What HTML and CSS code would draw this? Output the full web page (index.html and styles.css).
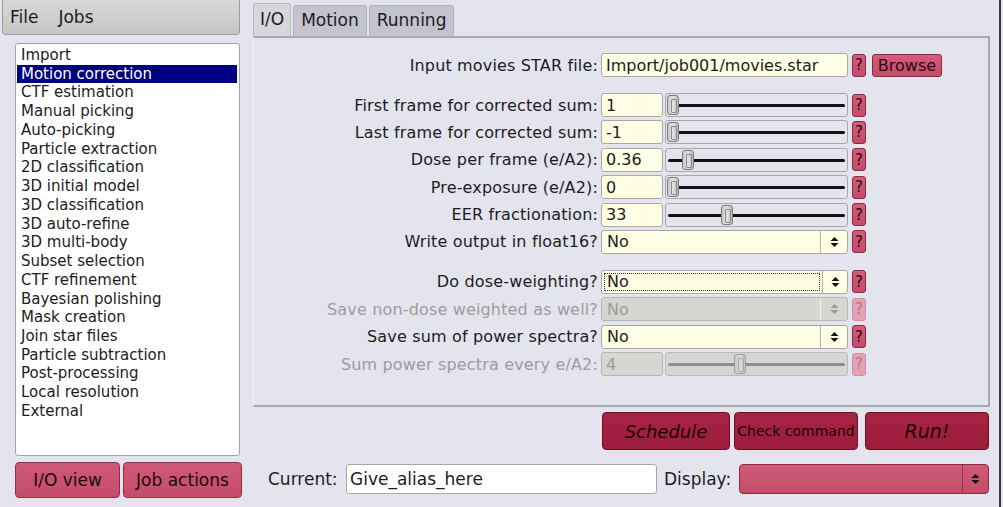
FILE: index.html
```html
<!DOCTYPE html>
<html>
<head>
<meta charset="utf-8">
<link rel="stylesheet" href="styles.css">
</head>
<body>
<div class="app">
  <div class="left">
    <div class="menubar"><span>File</span><span>Jobs</span></div>
    <div class="joblist">
      <div class="item">Import</div>
      <div class="item sel">Motion correction</div>
      <div class="item">CTF estimation</div>
      <div class="item">Manual picking</div>
      <div class="item">Auto-picking</div>
      <div class="item">Particle extraction</div>
      <div class="item">2D classification</div>
      <div class="item">3D initial model</div>
      <div class="item">3D classification</div>
      <div class="item">3D auto-refine</div>
      <div class="item">3D multi-body</div>
      <div class="item">Subset selection</div>
      <div class="item">CTF refinement</div>
      <div class="item">Bayesian polishing</div>
      <div class="item">Mask creation</div>
      <div class="item">Join star files</div>
      <div class="item">Particle subtraction</div>
      <div class="item">Post-processing</div>
      <div class="item">Local resolution</div>
      <div class="item">External</div>
    </div>
    <div class="leftbtns">
      <div class="pbtn io">I/O view</div>
      <div class="pbtn ja">Job actions</div>
    </div>
  </div>
  <div class="right">
    <div class="tabs">
      <div class="tab active">I/O</div>
      <div class="tab">Motion</div>
      <div class="tab">Running</div>
    </div>
    <div class="panel">
      <div class="group">
        <div class="row">
          <div class="lbl">Input movies STAR file:</div>
          <div class="ctl"><div class="input full">Import/job001/movies.star</div></div>
          <div class="help">?</div>
          <div class="browse">Browse</div>
        </div>
      </div>
      <div class="group">
        <div class="row">
          <div class="lbl">First frame for corrected sum:</div>
          <div class="ctl"><div class="input num">1</div><div class="slider"><div class="track"></div><div class="knob" style="left:1px"></div></div></div>
          <div class="help">?</div>
        </div>
        <div class="row">
          <div class="lbl">Last frame for corrected sum:</div>
          <div class="ctl"><div class="input num">-1</div><div class="slider"><div class="track"></div><div class="knob" style="left:1px"></div></div></div>
          <div class="help">?</div>
        </div>
        <div class="row">
          <div class="lbl">Dose per frame (e/A2):</div>
          <div class="ctl"><div class="input num">0.36</div><div class="slider"><div class="track"></div><div class="knob" style="left:16px"></div></div></div>
          <div class="help">?</div>
        </div>
        <div class="row">
          <div class="lbl">Pre-exposure (e/A2):</div>
          <div class="ctl"><div class="input num">0</div><div class="slider"><div class="track"></div><div class="knob" style="left:1px"></div></div></div>
          <div class="help">?</div>
        </div>
        <div class="row">
          <div class="lbl">EER fractionation:</div>
          <div class="ctl"><div class="input num">33</div><div class="slider"><div class="track"></div><div class="knob" style="left:55px"></div></div></div>
          <div class="help">?</div>
        </div>
        <div class="row">
          <div class="lbl">Write output in float16?</div>
          <div class="ctl"><div class="select"><div class="val">No</div><div class="arr"><svg width="9" height="12" viewBox="0 0 9 12"><path d="M0.5 5 L4.5 1 L8.5 5 Z M0.5 7 L4.5 11 L8.5 7 Z" fill="#111"/></svg></div></div></div>
          <div class="help">?</div>
        </div>
      </div>
      <div class="group">
        <div class="row">
          <div class="lbl">Do dose-weighting?</div>
          <div class="ctl"><div class="select"><div class="val"><span class="focus">No</span></div><div class="arr"><svg width="9" height="12" viewBox="0 0 9 12"><path d="M0.5 5 L4.5 1 L8.5 5 Z M0.5 7 L4.5 11 L8.5 7 Z" fill="#111"/></svg></div></div></div>
          <div class="help">?</div>
        </div>
        <div class="row dis">
          <div class="lbl">Save non-dose weighted as well?</div>
          <div class="ctl"><div class="select"><div class="val">No</div><div class="arr"><svg width="9" height="12" viewBox="0 0 9 12"><path d="M0.5 5 L4.5 1 L8.5 5 Z M0.5 7 L4.5 11 L8.5 7 Z" fill="#9a9a9a"/></svg></div></div></div>
          <div class="help">?</div>
        </div>
        <div class="row">
          <div class="lbl">Save sum of power spectra?</div>
          <div class="ctl"><div class="select"><div class="val">No</div><div class="arr"><svg width="9" height="12" viewBox="0 0 9 12"><path d="M0.5 5 L4.5 1 L8.5 5 Z M0.5 7 L4.5 11 L8.5 7 Z" fill="#111"/></svg></div></div></div>
          <div class="help">?</div>
        </div>
        <div class="row dis">
          <div class="lbl">Sum power spectra every e/A2:</div>
          <div class="ctl"><div class="input num">4</div><div class="slider"><div class="track"></div><div class="knob" style="left:68px"></div></div></div>
          <div class="help">?</div>
        </div>
      </div>
    </div>
    <div class="actions">
      <div class="dbtn sched">Schedule</div>
      <div class="dbtn check">Check command</div>
      <div class="dbtn run">Run!</div>
    </div>
    <div class="bottom">
      <div class="blbl cur">Current:</div>
      <div class="alias">Give_alias_here</div>
      <div class="blbl disp">Display:</div>
      <div class="display"><div class="dval"></div><div class="darr"><svg width="9" height="12" viewBox="0 0 9 12"><path d="M0.5 5 L4.5 1 L8.5 5 Z M0.5 7 L4.5 11 L8.5 7 Z" fill="#111"/></svg></div></div>
    </div>
  </div>
  <div class="edge"></div>
</div>
</body>
</html>
```
FILE: styles.css
```css
* { box-sizing: border-box; }
html, body { margin: 0; padding: 0; }
body {
  width: 1003px;
  height: 507px;
  overflow: hidden;
  background: #e4e4ee;
  font-family: "DejaVu Sans", sans-serif;
  color: #1c1c1c;
}
.app { display: flex; height: 507px; }

/* left column */
.left { width: 253px; flex: none; display: flex; flex-direction: column; }
.menubar {
  margin-left: 2px;
  width: 238px;
  height: 35px;
  border: 1px solid #9c9ca0;
  border-top: none;
  border-radius: 0 0 4px 4px;
  background: linear-gradient(#d8d8d8, #c6c6c6);
  font-size: 17px;
  display: flex;
  align-items: center;
  gap: 20px;
  padding: 0 0 0 7px;
}
.joblist {
  margin: 8px 0 0 15px;
  width: 225px;
  height: 413px;
  background: #fff;
  border: 1px solid #a4a4a8;
  border-radius: 3px;
  padding: 2px 2px 1px 1px;
  font-size: 15px;
}
.item { height: 18.74px; line-height: 18.74px; padding-left: 4px; white-space: nowrap; }
.item.sel { background: #000080; color: #fff; }
.leftbtns { display: flex; gap: 3px; margin: 6px 0 0 15px; }
.pbtn {
  height: 36px;
  border: 1px solid #8c3048;
  border-radius: 4px;
  background: linear-gradient(#d05a76, #c44c68);
  font-size: 17px;
  display: flex;
  align-items: center;
  justify-content: center;
  color: #1a0a0e;
}
.pbtn.io { width: 105px; }
.pbtn.ja { width: 119px; }

/* right column */
.right { width: 737px; flex: none; display: flex; flex-direction: column; }
.tabs { display: flex; align-items: flex-end; height: 36px; gap: 2px; }
.tab {
  height: 31px;
  padding: 0 7px 2px;
  font-size: 17px;
  display: flex;
  align-items: center;
  background: #c4c4d0;
  border: 1px solid #b0b0bc;
  border-bottom: none;
  border-radius: 3px 3px 0 0;
}
.tab.active { height: 33px; background: #d6d6dc; padding: 0 6px 2px; border-color: #b8b8c0; }
.panel {
  height: 371px;
  border-top: 2px solid #a8a8b2;
  border-right: 2px solid #a8a8b2;
  border-bottom: 2px solid #a8a8b2;
  border-left: 1px solid #f2f2f8;
  padding-top: 15px;
  display: flex;
  flex-direction: column;
  gap: 16px;
  font-size: 16px;
}
.group { display: flex; flex-direction: column; gap: 3.4px; }
.row { display: flex; align-items: center; height: 24px; }
.lbl { width: 344px; text-align: right; margin-right: 3px; white-space: nowrap; letter-spacing: 0.16px; }
.ctl { width: 247px; height: 24px; display: flex; gap: 2px; }
.input {
  height: 24px;
  background: #ffffe6;
  border: 1px solid #a8a8a0;
  border-radius: 3px;
  padding-left: 4px;
  display: flex;
  align-items: center;
  white-space: nowrap;
}
.input.full { width: 247px; }
.input.num { width: 62px; }
.slider {
  position: relative;
  width: 183px;
  height: 24px;
  border: 1px solid #a8a8ac;
  border-radius: 3px;
}
.track {
  position: absolute;
  left: 2px; right: 2px; top: 10px;
  height: 3px;
  border-radius: 2px;
  background: #111;
}
.knob {
  position: absolute;
  top: 1px;
  width: 12px;
  height: 20px;
  border: 1px solid #7c7c80;
  border-radius: 3px;
  background: linear-gradient(90deg, #c8c8c8, #e2e2e2 50%, #b8b8b8);
}
.knob::after {
  content: "";
  position: absolute;
  left: 3px; top: 3px;
  width: 4px; height: 12px;
  border: 1px solid #8a8a8a;
  border-radius: 1px;
}
.select {
  width: 247px;
  height: 24px;
  background: #ffffe6;
  border: 1px solid #a8a8a0;
  border-radius: 3px;
  display: flex;
}
.select .val {
  flex: 1;
  padding: 2px 2px 2px 5px;
  display: flex;
  align-items: center;
  border-right: 1px solid #b4b4a8;
  white-space: nowrap;
}
.select .val .focus { margin-left: -3px; }
.focus {
  display: flex;
  align-items: center;
  width: 216px;
  height: 18px;
  padding-left: 2px;
  border: 1px dotted #333;
}
.select .arr { width: 26px; display: flex; align-items: center; justify-content: center; }
.help {
  width: 14px;
  height: 23px;
  margin-left: 4px;
  border: 1px solid #8a2a44;
  border-radius: 3px;
  background: linear-gradient(#d45c7a, #c44a68);
  font-size: 15px;
  display: flex;
  align-items: center;
  justify-content: center;
  color: #2a0a12;
}
.browse {
  margin-left: 6px;
  width: 70px;
  height: 23px;
  border: 1px solid #8a2a44;
  border-radius: 3px;
  background: linear-gradient(#d45c7a, #c44a68);
  font-size: 16px;
  display: flex;
  align-items: center;
  justify-content: center;
  color: #2a0a12;
}
.row.dis { color: #9c9c9c; }
.row.dis .input, .row.dis .select { background: #d6d6d2; border-color: #b8b8b4; }
.row.dis .select .val { border-right-color: #f0f0ee; }
.row.dis .slider { border-color: #bcbcc0; background: #d6d6d8; }
.row.dis .track { background: #8e8e8e; }
.row.dis .knob { border-color: #a0a0a0; background: linear-gradient(90deg, #cacaca, #dadada 50%, #c2c2c2); }
.row.dis .knob::after { border-color: #a8a8a8; }
.row.dis .help { background: #e2a2b2; border-color: #d090a0; color: #b07888; }

.actions { display: flex; justify-content: flex-end; gap: 4px; padding: 5px 0 0 0; margin-right: 1px; }
.dbtn {
  height: 38px;
  border: 1px solid #6a1026;
  border-radius: 4px;
  background: linear-gradient(#a82444, #9c1c3a);
  color: #1a0308;
  display: flex;
  align-items: center;
  justify-content: center;
}
.dbtn.sched { width: 128px; font-size: 18px; font-style: italic; }
.dbtn.check { width: 124px; font-size: 14px; margin-right: 3px; }
.dbtn.run { width: 124px; font-size: 19px; font-style: italic; }
.bottom { display: flex; align-items: center; margin-top: 14px; height: 30px; }
.blbl { font-size: 17px; white-space: nowrap; }
.cur { margin-left: 15px; width: 78px; }
.alias {
  width: 311px;
  height: 30px;
  background: #fff;
  border: 1px solid #a8a8ac;
  border-radius: 3px;
  font-size: 17px;
  padding-left: 3px;
  display: flex;
  align-items: center;
}
.disp { margin-left: 7px; width: 75px; }
.display {
  width: 250px;
  height: 30px;
  border: 1px solid #8a2a44;
  border-radius: 4px;
  background: linear-gradient(#d05a76, #c44c68);
  display: flex;
}
.dval { flex: 1; border-right: 1px solid #9a3450; }
.darr { width: 25px; display: flex; align-items: center; justify-content: center; }
.edge { flex: 1; position: relative; }
.edge::after {
  content: "";
  position: absolute;
  right: 2px; top: 0; bottom: 0;
  width: 2px;
  background: #3a3a3a;
}
```
